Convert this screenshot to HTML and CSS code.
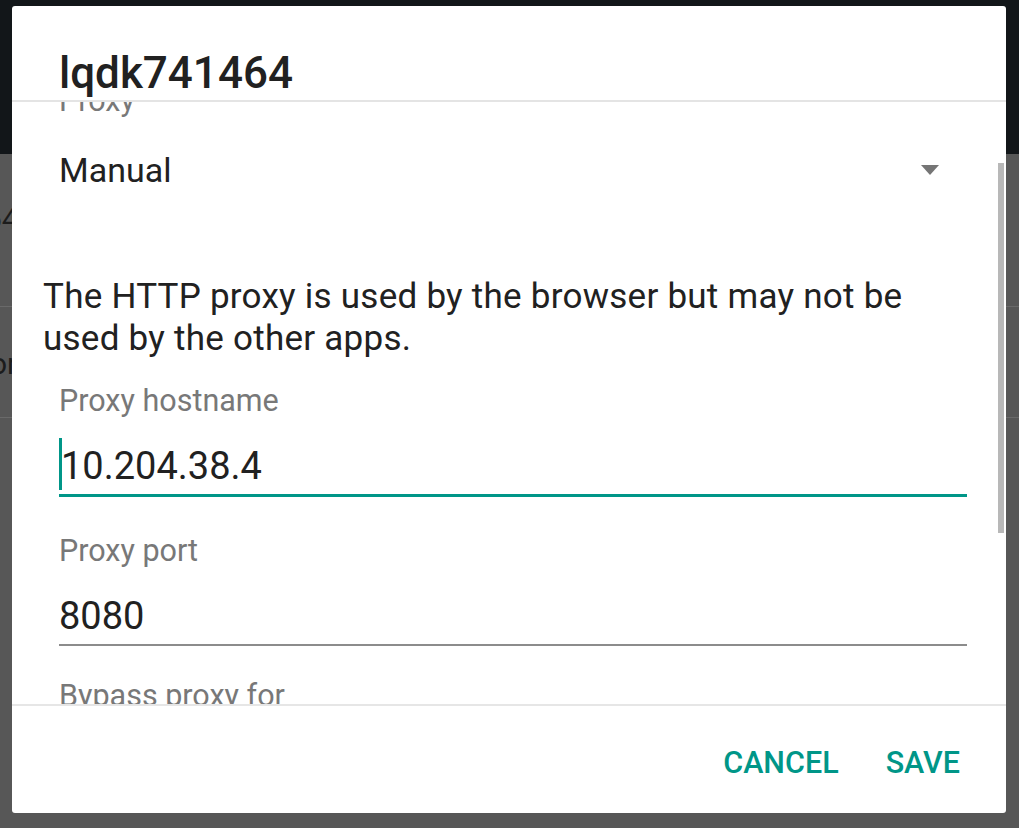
FILE: index.html
```html
<!DOCTYPE html>
<html lang="en">
<head>
<meta charset="UTF-8" />
<meta name="viewport" content="width=device-width, initial-scale=1" />
<title>lqdk741464 - Proxy</title>
<link rel="stylesheet" href="styles.css">
</head>
<body>

<div class="screen">
  <div class="appbar"></div>
  <div class="list">
    <div class="row row-one"><span class="row-text">64</span></div>
    <div class="row row-two"><span class="row-text">or</span></div>
    <div class="row-rest"></div>
  </div>

  <div class="dialog">
    <div class="dialog-title">lqdk741464</div>

    <div class="dialog-body">
      <div class="scroll">
        <div class="field-label label-proxy">Proxy</div>
        <div class="spinner">
          <span>Manual</span>
          <span class="caret"></span>
        </div>

        <p class="note">The HTTP proxy is used by the browser but may not be used by the other apps.</p>

        <div class="field-label label-host">Proxy hostname</div>
        <div class="input input-focused"><span class="cursor"></span>10.204.38.4</div>

        <div class="field-label label-port">Proxy port</div>
        <div class="input input-port">8080</div>

        <div class="field-label label-bypass">Bypass proxy for</div>
        <div class="input">example.com,mycomp.test.com,localhost</div>
      </div>
      <div class="scrollbar"></div>
    </div>

    <div class="dialog-actions">
      <button class="action">CANCEL</button>
      <button class="action">SAVE</button>
    </div>
  </div>
</div>

</body>
</html>
```

FILE: styles.css
```css
body {
  margin: 0;
  background-color: #575757;
  font-family: Roboto, 'Noto Sans', sans-serif;
  overflow: hidden;
}
.screen {
  position: relative;
  width: 1019px;
  height: 828px;
  overflow: hidden;
}

/* dimmed screen behind the dialog */
.appbar {
  height: 154px;
  background: #121619;
}
.list {
  background: #575757;
}
.row {
  border-bottom: 1px solid #6a6a6a;
  color: #1c1c1c;
  font-size: 30px;
  line-height: 36px;
  white-space: nowrap;
}
.row-one {
  height: 105px;
  padding-top: 47px;
}
.row-one .row-text {
  margin-left: -15px;
}
.row-two {
  height: 71px;
  padding-top: 39px;
}
.row-two .row-text {
  margin-left: -10px;
}
.row-text {
  display: inline-block;
}
.row-rest {
  height: 400px;
}

/* dialog */
.dialog {
  position: absolute;
  left: 12px;
  top: 6px;
  width: 994px;
  height: 807px;
  background: #fff;
  border-radius: 3px;
  display: flex;
  flex-direction: column;
  overflow: hidden;
}
.dialog-title {
  height: 52px;
  padding: 42px 0 0 47px;
  font-size: 44px;
  line-height: 50px;
  font-weight: 500;
  color: #212121;
  border-bottom: 2px solid #e4e4e4;
}
.dialog-body {
  position: relative;
  height: 602px;
  overflow: hidden;
}
.scroll {
  margin-top: -18px;
  padding: 0 39px 0 31px;
}
.field-label {
  margin-left: 16px;
  font-size: 30.5px;
  line-height: 34px;
  color: #787878;
}
.spinner {
  margin: 32px 0 0 16px;
  display: flex;
  align-items: center;
  justify-content: space-between;
  font-size: 34px;
  line-height: 40px;
  color: #212121;
}
.caret {
  width: 0;
  height: 0;
  margin-right: 28px;
  border-left: 9px solid transparent;
  border-right: 9px solid transparent;
  border-top: 10px solid #757575;
}
.note {
  margin: 86px 0 0;
  font-size: 35px;
  line-height: 42px;
  letter-spacing: 0.25px;
  color: #212121;
}
.label-host {
  margin-top: 24px;
}
.label-port {
  margin-top: 37px;
}
.label-bypass {
  margin-top: 33px;
}
.input {
  position: relative;
  margin: 29px 0 0 16px;
  padding-bottom: 6px;
  font-size: 38px;
  line-height: 44px;
  color: #212121;
  border-bottom: 2px solid #8c8c8c;
}
.input-focused {
  margin-top: 26px;
  text-indent: 2px;
  border-bottom: 3px solid #009688;
}
.input-port {
  margin-top: 26px;
}
.cursor {
  position: absolute;
  left: 0;
  top: -6px;
  width: 3px;
  height: 52px;
  background: #009688;
}
.scrollbar {
  position: absolute;
  right: 2px;
  top: 61px;
  width: 6px;
  height: 370px;
  background: #b8b8b8;
}
.dialog-actions {
  flex: 1;
  display: flex;
  justify-content: flex-end;
  align-items: center;
  gap: 47px;
  padding: 7px 46px 0 0;
  border-top: 2px solid #e6e6e6;
}
.action {
  background: transparent;
  border: none;
  padding: 0;
  font-family: Roboto, sans-serif;
  font-size: 30.5px;
  line-height: 36px;
  font-weight: 500;
  color: #009688;
  cursor: pointer;
}
```
